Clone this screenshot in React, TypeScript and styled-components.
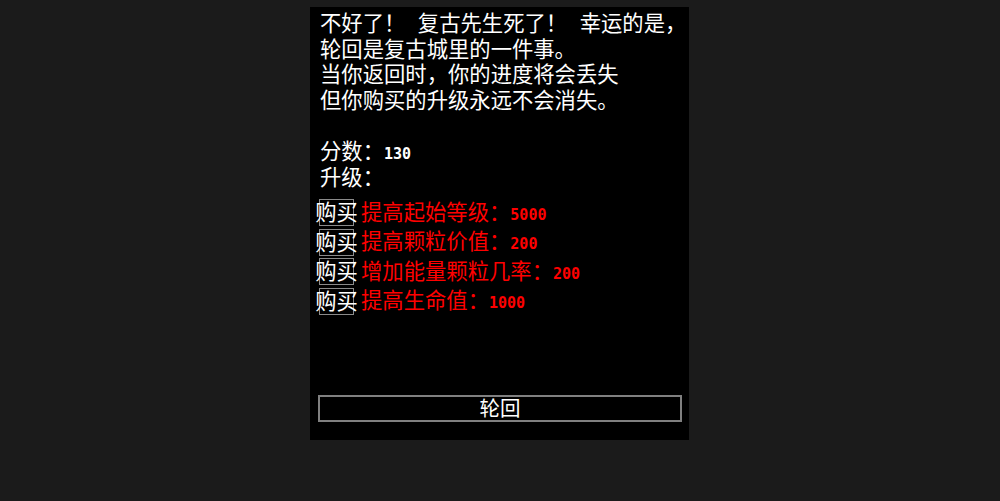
import React from "react";
import styled, { createGlobalStyle } from "styled-components";

const Global = createGlobalStyle`
  html, body { margin: 0; padding: 0; background: #1b1b1b; }
  body { font-family: "Noto Sans CJK SC", "Noto Sans", sans-serif; }
`;

const Page = styled.div`
  display: flex;
  justify-content: center;
  padding: 7px 1px 0 0;
  height: 501px;
  box-sizing: border-box;
`;

const Panel = styled.div`
  width: 379px;
  height: 433px;
  box-sizing: border-box;
  background: #000;
  color: #fff;
  padding: 2px 7px 18px 10px;
  display: flex;
  flex-direction: column;
  font-size: 21.33px;
  line-height: 25.6px;
`;

const Line = styled.div`
  white-space: pre;
  height: 25.6px;
`;

const Gap = styled.span`
  display: inline-block;
  width: 12.5px;
`;

const Num = styled.span`
  font-family: "DejaVu Sans Mono", monospace;
  font-weight: bold;
  font-size: 15px;
`;

const Upgrades = styled.div`
  display: flex;
  flex-direction: column;
  margin-top: 10px;
  margin-left: -1px;
`;

const Row = styled.div`
  display: flex;
  align-items: center;
  height: 29.5px;
  gap: 7px;
`;

const BuyButton = styled.button`
  width: 35px;
  height: 27px;
  padding: 0 0 4px 0;
  box-sizing: border-box;
  background: #000;
  color: #fff;
  border: 1px solid #8a8a8a;
  font-family: "Noto Sans CJK SC", sans-serif;
  font-size: 21.33px;
  line-height: 1;
  white-space: nowrap;
  overflow: visible;
  display: flex;
  align-items: center;
  justify-content: center;
  cursor: pointer;
`;

const Label = styled.span<{ $color?: string }>`
  color: ${(p) => p.$color ?? "#f00"};
  white-space: nowrap;
`;

const ResetButton = styled.button`
  margin-top: auto;
  margin-left: -2px;
  width: 364px;
  height: 27px;
  padding: 0 0 2px 0;
  box-sizing: border-box;
  background: #000;
  color: #fff;
  border: 2px solid #808080;
  font-family: "Noto Sans CJK SC", sans-serif;
  font-size: 20.5px;
  line-height: 1;
  display: flex;
  align-items: center;
  justify-content: center;
  cursor: pointer;
`;

const upgrades = [
  { name: "提高起始等级", cost: 5000 },
  { name: "提高颗粒价值", cost: 200 },
  { name: "增加能量颗粒几率", cost: 200 },
  { name: "提高生命值", cost: 1000 },
];

export default function App() {
  return (
    <>
      <Global />
      <Page>
        <Panel>
          <Line>
            不好了！<Gap />复古先生死了！<Gap />幸运的是，
          </Line>
          <Line>轮回是复古城里的一件事。</Line>
          <Line>当你返回时，你的进度将会丢失</Line>
          <Line>但你购买的升级永远不会消失。</Line>
          <Line> </Line>
          <Line>
            分数：<Num>130</Num>
          </Line>
          <Line>升级：</Line>
          <Upgrades>
            {upgrades.map((u) => (
              <Row key={u.name}>
                <BuyButton>购买</BuyButton>
                <Label>
                  {u.name}：<Num>{u.cost}</Num>
                </Label>
              </Row>
            ))}
          </Upgrades>
          <ResetButton>轮回</ResetButton>
        </Panel>
      </Page>
    </>
  );
}
